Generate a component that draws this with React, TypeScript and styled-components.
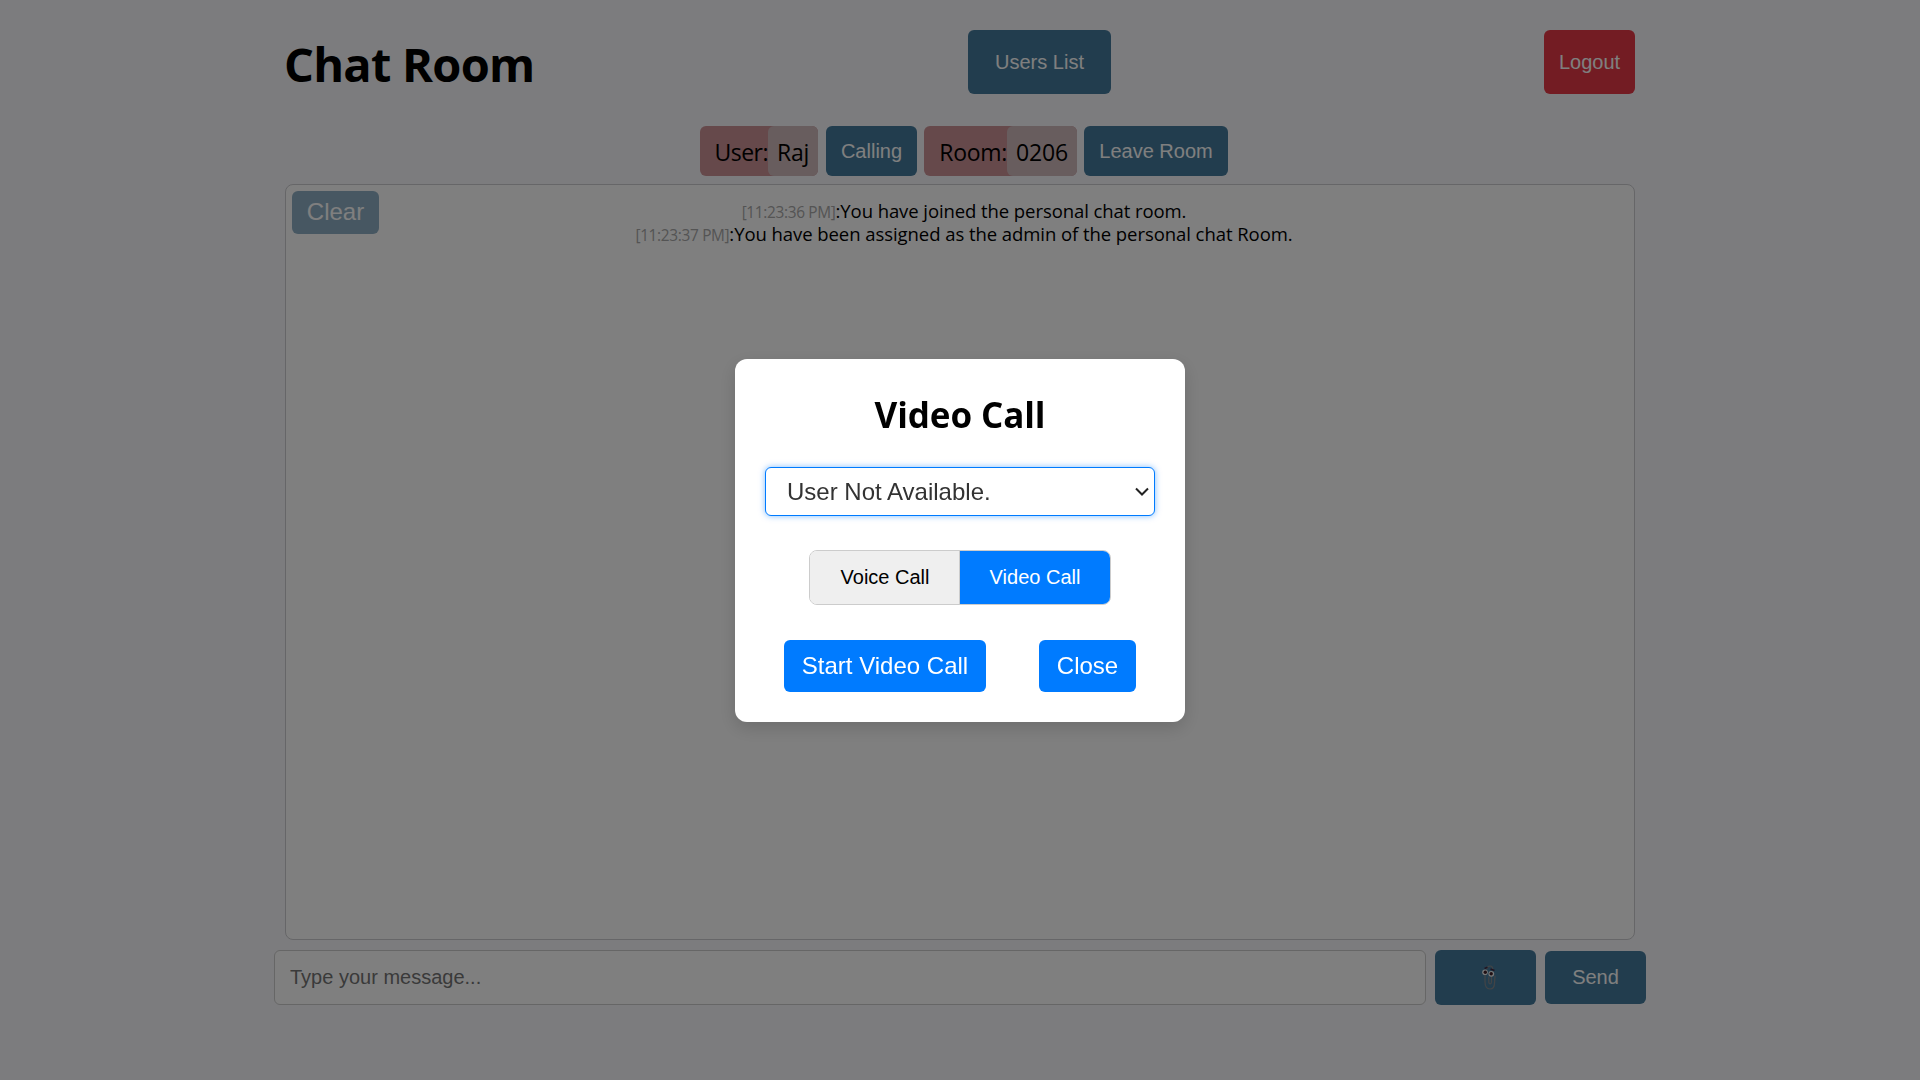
import React from "react";
import styled, { createGlobalStyle } from "styled-components";

const ui = `"Segoe UI", "Open Sans", "Noto Sans", sans-serif`;
const arial = `"Liberation Sans", Arial, sans-serif`;

const GlobalStyle = createGlobalStyle`
  *, *::before, *::after { box-sizing: border-box; }
  html, body { margin: 0; height: 100%; overflow: hidden; }
  body { background: #f8f8fc; color: #000; font-family: ${ui}; }
`;

const Page = styled.div`
  width: 1372px;
  margin: 0 auto;
  padding-top: 30px;
  display: flex;
  flex-direction: column;
`;

const Header = styled.header`
  display: flex;
  justify-content: space-between;
  align-items: center;
  height: 64px;
  padding: 0 11px;
`;

const Title = styled.h1`
  margin: 0 0 0 -1px;
  width: 251px;
  white-space: nowrap;
  font-size: 47px;
  line-height: 64px;
  letter-spacing: -0.75px;
  font-weight: 700;
  padding-top: 3px;
`;

const Button = styled.button<{ $w: number; $h: number; $bg?: string }>`
  width: ${(p) => p.$w}px;
  height: ${(p) => p.$h}px;
  flex: none;
  display: flex;
  align-items: center;
  justify-content: center;
  padding: 0;
  border: none;
  border-radius: 6px;
  background: ${(p) => p.$bg ?? "#457b9d"};
  color: #fff;
  font: 20px ${arial};
  white-space: nowrap;
`;

const RoomBar = styled.div`
  display: flex;
  align-items: flex-start;
  height: 50px;
  margin: 32px 0 8px;
  padding-left: 426px;
`;

const Chip = styled.div<{ $w: number; $mr: number }>`
  display: flex;
  justify-content: flex-end;
  align-items: center;
  width: ${(p) => p.$w}px;
  height: 50px;
  margin-right: ${(p) => p.$mr}px;
  border-radius: 6px;
  background: #cc9296;
  font-size: 23px;
  white-space: nowrap;
`;

const ChipLabel = styled.span<{ $ls: number }>`
  letter-spacing: ${(p) => p.$ls}px;
  padding-top: 1px;
`;

const ChipValue = styled.span<{ $w: number; $ls: number }>`
  display: flex;
  align-items: center;
  justify-content: center;
  width: ${(p) => p.$w}px;
  height: 50px;
  padding-top: 1px;
  border-radius: 6px;
  background: #d1babd;
  letter-spacing: ${(p) => p.$ls}px;
`;

const Spacer = styled.span<{ $w: number }>`
  width: ${(p) => p.$w}px;
  flex: none;
`;

const ChatBox = styled.main`
  position: relative;
  height: 756px;
  margin: 0 11px;
  padding: 14px 0 0 8px;
  border: 1px solid #ccccd0;
  border-radius: 8px;
  background: #fff;
`;

const ClearButton = styled(Button)`
  position: absolute;
  left: 6px;
  top: 6px;
  padding-bottom: 2px;
  font-size: 24px;
  opacity: 0.6;
`;

const Message = styled.p`
  display: flex;
  justify-content: center;
  align-items: baseline;
  height: 23px;
  margin: 0;
  line-height: 23px;
  white-space: nowrap;
`;

const Time = styled.span`
  color: #a8a8a8;
  font-size: 15.4px;
  letter-spacing: -0.32px;
`;

const Body = styled.span<{ $ls: number }>`
  font-size: 18.5px;
  letter-spacing: ${(p) => p.$ls}px;
`;

const Composer = styled.form`
  display: flex;
  align-items: center;
  gap: 9px;
  height: 55px;
  margin-top: 10px;
`;

const MessageInput = styled.input`
  flex: 1;
  min-width: 0;
  height: 55px;
  padding: 0 15px;
  border: 1px solid #ccc;
  border-radius: 6px;
  background: #fff;
  font: 20px ${arial};
  &::placeholder { color: #757575; opacity: 1; }
`;

const Overlay = styled.div`
  position: fixed;
  inset: 0;
  display: flex;
  align-items: center;
  justify-content: center;
  background: rgba(0, 0, 0, 0.5);
`;

const Modal = styled.section`
  width: 450px;
  height: 363px;
  margin-top: 1px;
  padding: 30px;
  display: flex;
  flex-direction: column;
  align-items: center;
  border-radius: 12px;
  background: #fff;
  box-shadow: 0 6px 18px rgba(0, 0, 0, 0.15);
`;

const ModalTitle = styled.h2`
  margin: 0 0 29px;
  height: 49px;
  line-height: 52px;
  font-size: 35px;
  font-weight: 700;
  letter-spacing: -0.1px;
`;

const SelectWrap = styled.div`
  position: relative;
  flex: none;
  width: 390px;
  height: 49px;
`;

const UserSelect = styled.select`
  appearance: none;
  width: 390px;
  height: 49px;
  padding: 0 21px;
  border: 1px solid #007bff;
  border-radius: 6px;
  outline: none;
  background-color: #fff;
  color: #333;
  font: 24px ${arial};
  box-shadow: 0 0 6px rgba(0, 123, 255, 0.5);
`;

const Chevron = styled.svg`
  position: absolute;
  right: 6px;
  top: 20px;
  pointer-events: none;
`;

const Toggle = styled.div`
  display: flex;
  flex: none;
  width: 302px;
  height: 55px;
  margin: 34px 0 35px;
  border: 1px solid #ccc;
  border-radius: 8px;
  overflow: hidden;
`;

const ToggleOption = styled.button<{ $active?: boolean }>`
  flex: 1 1 0;
  min-width: 0;
  padding: 0;
  border: none;
  box-shadow: ${(p) => (p.$active ? "none" : "inset -1px 0 #ccc")};
  background: ${(p) => (p.$active ? "#007bff" : "#efefef")};
  color: ${(p) => (p.$active ? "#fff" : "#000")};
  font: 20px ${arial};
`;

const Actions = styled.div`
  display: flex;
  gap: 53px;
`;

const ActionButton = styled(Button)`
  font-size: 24px;
`;

const ClipIcon = styled.svg`
  margin-left: 7px;
`;

const Clip = () => (
  <ClipIcon width="14" height="26" viewBox="0 0 14 26" fill="none">
    <path
      d="M3 9.500v7c0 5 1.800 7.500 5 7.500s4.500-2.200 4.500-6l.5-7M4.500 4c.5-2 2-3 3.700-3 1.600 0 2.300 1 2.500 2.500M9.500 11.500v5.500c0 1.200-.5 1.800-1.300 1.800S6.800 18 6.800 17v-5"
      stroke="#85888c"
      strokeWidth="1.200"
      strokeLinecap="round"
    />
    <circle cx="3" cy="7.300" r="2.800" fill="#f0f0f0" />
    <circle cx="9.300" cy="8.800" r="2.900" fill="#f0f0f0" />
    <circle cx="3.300" cy="7.300" r="1.700" fill="#402028" />
    <circle cx="9.200" cy="8.800" r="1.700" fill="#402028" />
    <path d="M2.500 3.500l3-1.300M8.500 4l4 1.500" stroke="#402a42" strokeWidth="1.500" />
  </ClipIcon>
);

export default function App() {
  return (
    <>
      <GlobalStyle />
      <Page>
        <Header>
          <Title>Chat Room</Title>
          <Button $w={143} $h={64}>Users List</Button>
          <Button $w={91} $h={64} $bg="#e63946">Logout</Button>
        </Header>
        <RoomBar>
          <Chip $w={118} $mr={8}>
            <ChipLabel $ls={-0.5}>User:</ChipLabel>
            <ChipValue $w={50} $ls={-0.2}>Raj</ChipValue>
          </Chip>
          <Button $w={91} $h={50}>Calling</Button>
          <Spacer $w={7} />
          <Chip $w={153} $mr={7}>
            <ChipLabel $ls={-0.3}>Room:</ChipLabel>
            <ChipValue $w={70} $ls={-0.2}>0206</ChipValue>
          </Chip>
          <Button $w={144} $h={50}>Leave Room</Button>
        </RoomBar>
        <ChatBox>
          <ClearButton $w={87} $h={43}>Clear</ClearButton>
          <Message>
            <Time>[11:23:36 PM]</Time>
            <Body $ls={-0.08}>:You have joined the personal chat room.</Body>
          </Message>
          <Message>
            <Time>[11:23:37 PM]</Time>
            <Body $ls={-0.06}>:You have been assigned as the admin of the personal chat Room.</Body>
          </Message>
        </ChatBox>
        <Composer>
          <MessageInput placeholder="Type your message..." />
          <Button type="button" $w={101} $h={55} aria-label="Attach"><Clip /></Button>
          <Button type="button" $w={101} $h={53}>Send</Button>
        </Composer>
      </Page>
      <Overlay>
        <Modal>
          <ModalTitle>Video Call</ModalTitle>
          <SelectWrap>
            <UserSelect>
              <option>User Not Available.</option>
            </UserSelect>
            <Chevron width="14" height="10" viewBox="0 0 14 10" fill="none">
              <path d="M1 1.500l6 6 6-6" stroke="#222" strokeWidth="2" />
            </Chevron>
          </SelectWrap>
          <Toggle>
            <ToggleOption>Voice Call</ToggleOption>
            <ToggleOption $active>Video Call</ToggleOption>
          </Toggle>
          <Actions>
            <ActionButton $w={202} $h={52} $bg="#007bff">Start Video Call</ActionButton>
            <ActionButton $w={97} $h={52} $bg="#007bff">Close</ActionButton>
          </Actions>
        </Modal>
      </Overlay>
    </>
  );
}
